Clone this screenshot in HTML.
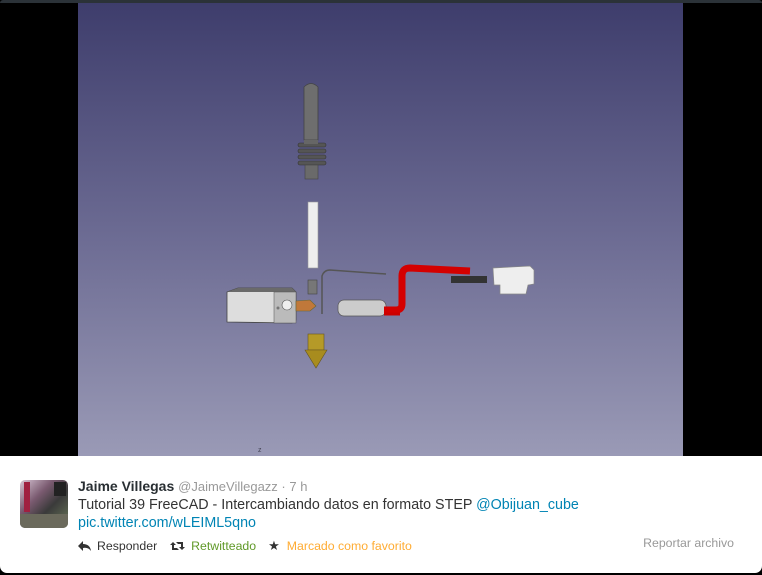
<!DOCTYPE html>
<html><head><meta charset="utf-8"><style>
*{margin:0;padding:0;box-sizing:border-box}
html,body{width:762px;height:575px;background:#000;overflow:hidden;font-family:"Liberation Sans",sans-serif}
.top{position:absolute;left:0;top:0;width:762px;height:3px;background:#2b3238;border-radius:4px 4px 0 0}
.img{position:absolute;left:78px;top:3px;width:605px;height:453px;background:linear-gradient(#3e3d6c 0%,#6b6a92 50%,#9a9ab6 100%)}
.card{position:absolute;left:0;top:456px;width:762px;height:117px;background:#fff;border-radius:0 0 7px 7px}
.av{position:absolute;left:20px;top:24px;width:48px;height:48px;border-radius:5px;background:linear-gradient(135deg,#d9c7d6 0%,#7a5a70 35%,#3a3a3a 60%,#6b7a5a 100%);overflow:hidden}
.name{position:absolute;left:78px;top:22px;font-size:14px;font-weight:bold;color:#292f33}
.name span{font-weight:normal;color:#999;font-size:13px}
.t1{position:absolute;left:78px;top:40px;font-size:14.3px;color:#333;line-height:18px}
a{color:#0084b4;text-decoration:none}
.acts{position:absolute;left:78px;top:82px;font-size:12.3px;color:#333;display:flex;align-items:center}
.acts .g{color:#609928}.acts .o{color:#ffac33}
.rep{position:absolute;right:28px;top:80px;font-size:12.3px;color:#999}
</style></head><body>
<div class="top"></div>
<div class="img">
<svg width="605" height="453" viewBox="78 3 605 453" xmlns="http://www.w3.org/2000/svg">
<path d="M304 87 Q311 80 318 87 L318 140 L304 140 Z" fill="#6e6e6e" stroke="#444" stroke-width="0.8"/>
<g fill="#555" stroke="#333" stroke-width="0.6">
<rect x="298" y="143" width="28" height="4" rx="2"/><rect x="298" y="149" width="28" height="4" rx="2"/><rect x="298" y="155" width="28" height="4" rx="2"/><rect x="298" y="161" width="28" height="4" rx="2"/>
</g>
<rect x="304" y="140" width="14" height="4" fill="#666"/>
<rect x="305" y="165" width="13" height="14" fill="#6a6a6a" stroke="#444" stroke-width="0.6"/>
<rect x="308" y="202" width="10" height="66" fill="#eee" stroke="#999" stroke-width="0.6"/>
<path d="M322 314 L322 276 Q324 270 330 270 L386 274" fill="none" stroke="#555" stroke-width="1.5"/>
<rect x="308" y="280" width="9" height="14" fill="#777" stroke="#444" stroke-width="0.6"/>
<path d="M227 292 L238 288 L292 288 L296 292 L296 320 L292 323 L227 322 Z" fill="#ddd" stroke="#444" stroke-width="0.8"/>
<path d="M227 292 L238 288 L292 288 L296 292 Z" fill="#6a6a6a"/>
<rect x="274" y="292" width="22" height="31" fill="#bbb" stroke="#555" stroke-width="0.5"/>
<circle cx="287" cy="305" r="5" fill="#eee" stroke="#555" stroke-width="0.6"/>
<circle cx="278" cy="308" r="1.5" fill="#777"/>
<path d="M296 301 L310 300 L316 306 L310 311 L296 311 Z" fill="#c0783a" stroke="#663" stroke-width="0.6"/>
<rect x="308" y="334" width="16" height="16" fill="#b59a28" stroke="#665520" stroke-width="0.6"/>
<path d="M305 350 L327 350 L316 368 Z" fill="#a88c1e" stroke="#665520" stroke-width="0.6"/>
<rect x="338" y="300" width="48" height="16" rx="6" fill="#ccc" stroke="#555" stroke-width="0.7"/>
<path d="M384 310 L396 310 Q402 310 402 304 L402 276 Q402 268 410 268 L470 271" fill="none" stroke="#d40000" stroke-width="7"/>
<path d="M384 314 L400 314" fill="none" stroke="#c00" stroke-width="3"/>
<rect x="451" y="276" width="36" height="7" fill="#333"/>
<path d="M493 268 L530 266 L534 270 L534 284 L528 285 L526 294 L500 294 L500 285 L494 285 Z" fill="#eee" stroke="#888" stroke-width="0.7"/>
<text x="258" y="452" font-size="7" fill="#445" font-family="Liberation Sans">z</text>
</svg>
</div>
<div class="card">
<div class="av">
<div style="position:absolute;left:4px;top:2px;width:6px;height:30px;background:#a02040"></div>
<div style="position:absolute;left:34px;top:2px;width:12px;height:14px;background:#222"></div>
<div style="position:absolute;left:0;top:34px;width:48px;height:14px;background:#6b6a5c"></div>
</div>
<div class="name">Jaime Villegas <span>@JaimeVillegazz · 7 h</span></div>
<div class="t1">Tutorial 39 FreeCAD - Intercambiando datos en formato STEP <a>@Obijuan_cube</a><br><a>pic.twitter.com/wLEIML5qno</a></div>
<div class="acts">
<svg width="14" height="12" viewBox="0 0 14 12"><path d="M5 1 L0 6 L5 11 L5 8 Q10 7 13 11 Q12 4 5 4 Z" fill="#333"/></svg>
<span style="margin-left:5px">Responder</span>
<svg style="margin-left:13px" width="15" height="12" viewBox="0 0 15 12"><path d="M3 2 L0 5 L2 5 L2 10 L9 10 L7 8 L4 8 L4 5 L6 5 Z M12 10 L15 7 L13 7 L13 2 L6 2 L8 4 L11 4 L11 7 L9 7 Z" fill="#333"/></svg>
<span class="g" style="margin-left:6px">Retwitteado</span>
<span style="margin-left:12px;font-size:13px">★</span>
<span class="o" style="margin-left:7px">Marcado como favorito</span>
</div>
<div class="rep">Reportar archivo</div>
</div>
</body></html>
